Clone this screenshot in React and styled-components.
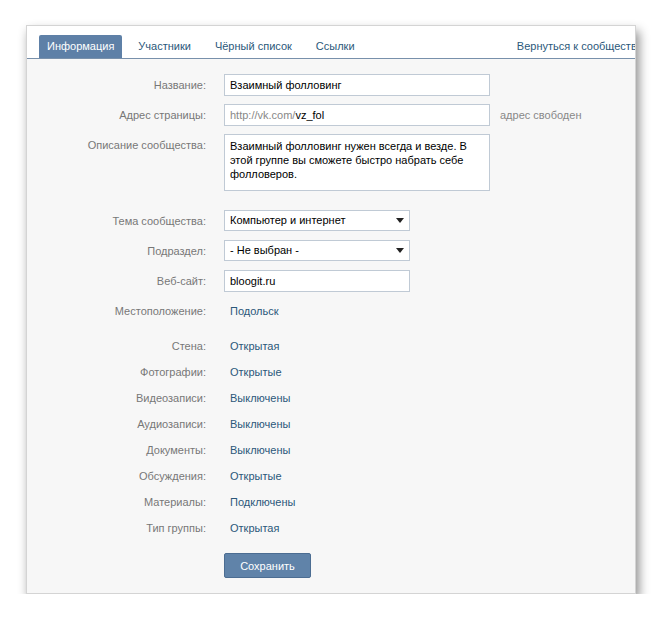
import React from 'react'
import styled, { createGlobalStyle } from 'styled-components'

const GlobalStyle = createGlobalStyle`
  html, body {
    margin: 0;
    padding: 0;
    background: #fff;
  }
  body {
    font-family: 'Liberation Sans', Arial, sans-serif;
    font-size: 11px;
  }
`

const Page = styled.div`
  padding: 25px 0 0 26px;
`

const Panel = styled.div`
  width: 608px;
  height: 567px;
  border: 1px solid #d4d4d4;
  background: #f7f7f7;
  overflow: hidden;
  box-shadow: 3px 6px 10px rgba(0, 0, 0, 0.45);
`

const TabBar = styled.div`
  display: flex;
  align-items: flex-end;
  height: 32px;
  padding-left: 12px;
  background: #fff;
  border-bottom: 1px solid #7890ab;
`

const Tab = styled.div`
  height: 23px;
  line-height: 23px;
  padding: 0 8px;
  margin-right: 8px;
  border-radius: 2px 2px 0 0;
  white-space: nowrap;
  color: ${p => (p.$active ? '#fff' : '#2b587a')};
  background: ${p => (p.$active ? '#5e80a7' : 'transparent')};
`

const BackLink = styled(Tab)`
  margin-left: auto;
  margin-right: -15px;
`

const Form = styled.div`
  padding: 15px 0 17px 0;
`

const Row = styled.div`
  display: grid;
  grid-template-columns: 179px 1fr;
  column-gap: 18px;
  align-items: ${p => (p.$top ? 'start' : 'center')};
  margin-bottom: ${p => p.$gap || 0}px;
  min-height: ${p => (p.$text ? 26 : 0)}px;
`

const Label = styled.div`
  text-align: right;
  color: #777;
  white-space: nowrap;
  padding-top: ${p => (p.$top ? 5 : 0)}px;
`

const Field = styled.div`
  display: flex;
  align-items: center;
  gap: 10px;
`

const Input = styled.div`
  box-sizing: border-box;
  width: ${p => p.$w || 266}px;
  height: ${p => p.$h || 22}px;
  padding: ${p => (p.$multi ? '4px 5px' : '0 5px')};
  line-height: ${p => (p.$multi ? '14px' : '20px')};
  border: 1px solid #c0cad5;
  background: #fff;
  color: #000;
  white-space: ${p => (p.$multi ? 'normal' : 'nowrap')};
`

const Muted = styled.span`
  color: #888;
`

const Select = styled(Input)`
  position: relative;
  width: 186px;
  height: 21px;
  line-height: 19px;
`

const Arrow = styled.span`
  position: absolute;
  right: 5px;
  top: 7px;
  width: 0;
  height: 0;
  border-left: 4px solid transparent;
  border-right: 4px solid transparent;
  border-top: 5px solid #222;
`

const Value = styled.div`
  padding-left: 6px;
  color: #2b587a;
  white-space: nowrap;
`

const SaveButton = styled.button`
  margin: 12px 0 0 197px;
  width: 87px;
  height: 25px;
  padding: 0;
  border: 1px solid #4c6d92;
  border-radius: 2px;
  background: #6083a9;
  color: #fff;
  font-family: inherit;
  font-size: 11px;
`

const settings = [
  ['Стена:', 'Открытая'],
  ['Фотографии:', 'Открытые'],
  ['Видеозаписи:', 'Выключены'],
  ['Аудиозаписи:', 'Выключены'],
  ['Документы:', 'Выключены'],
  ['Обсуждения:', 'Открытые'],
  ['Материалы:', 'Подключены'],
  ['Тип группы:', 'Открытая'],
]

export default function App() {
  return (
    <Page>
      <GlobalStyle />
      <Panel>
        <TabBar>
          <Tab $active>Информация</Tab>
          <Tab>Участники</Tab>
          <Tab>Чёрный список</Tab>
          <Tab>Ссылки</Tab>
          <BackLink>Вернуться к сообществу</BackLink>
        </TabBar>

        <Form>
          <Row $gap={8}>
            <Label>Название:</Label>
            <Field><Input>Взаимный фолловинг</Input></Field>
          </Row>
          <Row $gap={8}>
            <Label>Адрес страницы:</Label>
            <Field>
              <Input><Muted>http://vk.com/</Muted>vz_fol</Input>
              <Muted>адрес свободен</Muted>
            </Field>
          </Row>
          <Row $top $gap={19}>
            <Label $top>Описание сообщества:</Label>
            <Field>
              <Input $multi $h={57}>
                Взаимный фолловинг нужен всегда и везде. В этой группе вы сможете быстро набрать себе фолловеров.
              </Input>
            </Field>
          </Row>
          <Row $gap={9}>
            <Label>Тема сообщества:</Label>
            <Field><Select>Компьютер и интернет<Arrow /></Select></Field>
          </Row>
          <Row $gap={9}>
            <Label>Подраздел:</Label>
            <Field><Select>- Не выбран -<Arrow /></Select></Field>
          </Row>
          <Row $gap={6}>
            <Label>Веб-сайт:</Label>
            <Field><Input $w={186}>bloogit.ru</Input></Field>
          </Row>
          <Row $text $gap={9}>
            <Label>Местоположение:</Label>
            <Value>Подольск</Value>
          </Row>

          {settings.map(([label, value]) => (
            <Row $text key={label}>
              <Label>{label}</Label>
              <Value>{value}</Value>
            </Row>
          ))}

          <SaveButton>Сохранить</SaveButton>
        </Form>
      </Panel>
    </Page>
  )
}
